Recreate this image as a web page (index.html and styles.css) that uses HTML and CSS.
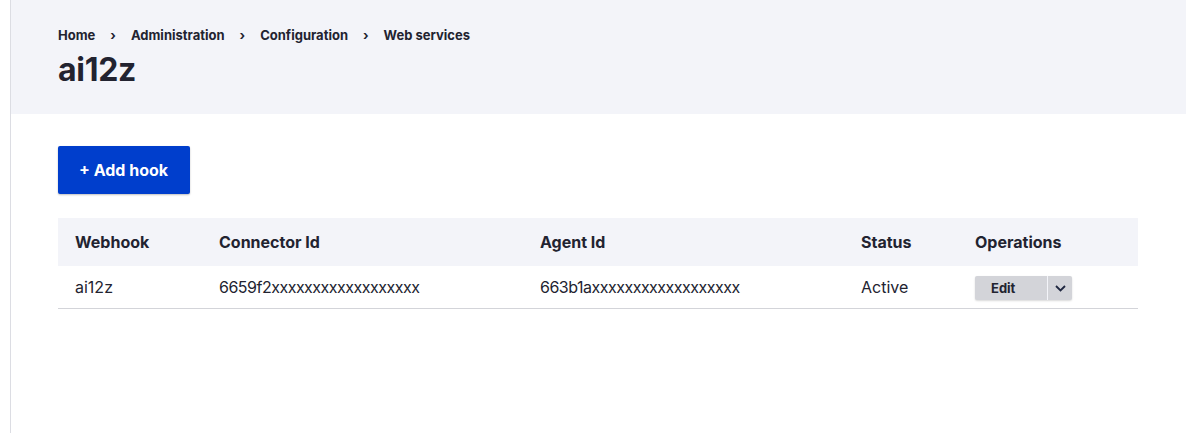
FILE: index.html
```html
<!DOCTYPE html>
<html lang="en">
<head>
<meta charset="utf-8">
<title>ai12z</title>
<link rel="stylesheet" href="styles.css">
</head>
<body>
<div class="page">
  <header class="page-header">
    <nav class="breadcrumb">
      <a href="#">Home</a><span class="sep">›</span>
      <a href="#">Administration</a><span class="sep">›</span>
      <a href="#">Configuration</a><span class="sep">›</span>
      <a href="#">Web services</a>
    </nav>
    <h1 class="title">ai12z</h1>
  </header>
  <main class="content">
    <div class="actions">
      <a class="button-primary" href="#">+ Add hook</a>
    </div>
    <table class="data-table">
      <colgroup>
        <col class="c1"><col class="c2"><col class="c3"><col class="c4"><col class="c5">
      </colgroup>
      <thead>
        <tr>
          <th>Webhook</th>
          <th>Connector Id</th>
          <th>Agent Id</th>
          <th>Status</th>
          <th>Operations</th>
        </tr>
      </thead>
      <tbody>
        <tr>
          <td>ai12z</td>
          <td class="id">6659f2xxxxxxxxxxxxxxxxxx</td>
          <td class="id">663b1axxxxxxxxxxxxxxxxxx</td>
          <td>Active</td>
          <td>
            <div class="dropbutton">
              <a class="dropbutton-main" href="#">Edit</a>
              <button class="dropbutton-toggle" type="button" aria-label="List additional actions">
                <svg width="11" height="7" viewBox="0 0 11 7"><path d="M1 1l4.5 4.5L10 1" fill="none" stroke="#1f2740" stroke-width="1.8"/></svg>
              </button>
            </div>
          </td>
        </tr>
      </tbody>
    </table>
  </main>
</div>
</body>
</html>
```

FILE: styles.css
```css
html, body {
  margin: 0;
  padding: 0;
  background: #ffffff;
}
body {
  font-family: Inter, "Liberation Sans", Arial, sans-serif;
  color: #222330;
}
.page {
  margin-left: 10px;
  border-left: 1px solid #dcdde3;
  min-height: 433px;
}
.page-header {
  background: #f3f4f9;
  padding: 28px 0 24px 47px;
}
.breadcrumb {
  font-size: 13px;
  line-height: 15px;
  font-weight: 700;
  display: flex;
  align-items: center;
}
.breadcrumb a {
  color: #222330;
  text-decoration: none;
}
.breadcrumb .sep {
  margin: 0 15px;
  font-weight: 700;
}
.title {
  margin: 7px 0 0;
  font-size: 32px;
  line-height: 40px;
  font-weight: 700;
  letter-spacing: -0.3px;
}
.content {
  padding: 32px 48px 0 47px;
}
.actions {
  display: flex;
}
.button-primary {
  display: inline-flex;
  align-items: center;
  height: 48px;
  box-sizing: border-box;
  padding: 0 22px 0 21px;
  background: #003ecc;
  color: #ffffff;
  font-size: 16px;
  font-weight: 700;
  text-decoration: none;
  border-radius: 2px;
  box-shadow: 0 1px 2px rgba(0, 0, 0, 0.25);
}
.data-table {
  margin-top: 24px;
  width: 1080px;
  border-collapse: collapse;
  table-layout: fixed;
  font-size: 16px;
}
.c1 { width: 144px; }
.c2 { width: 321px; }
.c3 { width: 321px; }
.c4 { width: 114px; }
.c5 { width: 180px; }
.data-table th {
  background: #f3f4f9;
  text-align: left;
  font-weight: 700;
  height: 48px;
  padding: 0 0 0 17px;
}
.data-table td {
  height: 42px;
  padding: 0 0 0 17px;
  border-bottom: 1px solid #d3d4d9;
}
.data-table td.id {
  letter-spacing: -0.5px;
}
.dropbutton {
  display: inline-flex;
  align-items: stretch;
  height: 24px;
  border-radius: 2px;
  background: #d3d4d9;
  box-shadow: 0 1px 2px rgba(0, 0, 0, 0.15);
  vertical-align: middle;
  margin-top: 2px;
}
.dropbutton-main {
  width: 73px;
  box-sizing: border-box;
  padding-left: 16px;
  display: flex;
  align-items: center;
  font-size: 13px;
  font-weight: 700;
  color: #222330;
  text-decoration: none;
  border-right: 1px solid #f3f4f9;
}
.dropbutton-toggle {
  width: 24px;
  border: 0;
  background: transparent;
  padding: 0;
  display: flex;
  align-items: center;
  justify-content: center;
}
```
